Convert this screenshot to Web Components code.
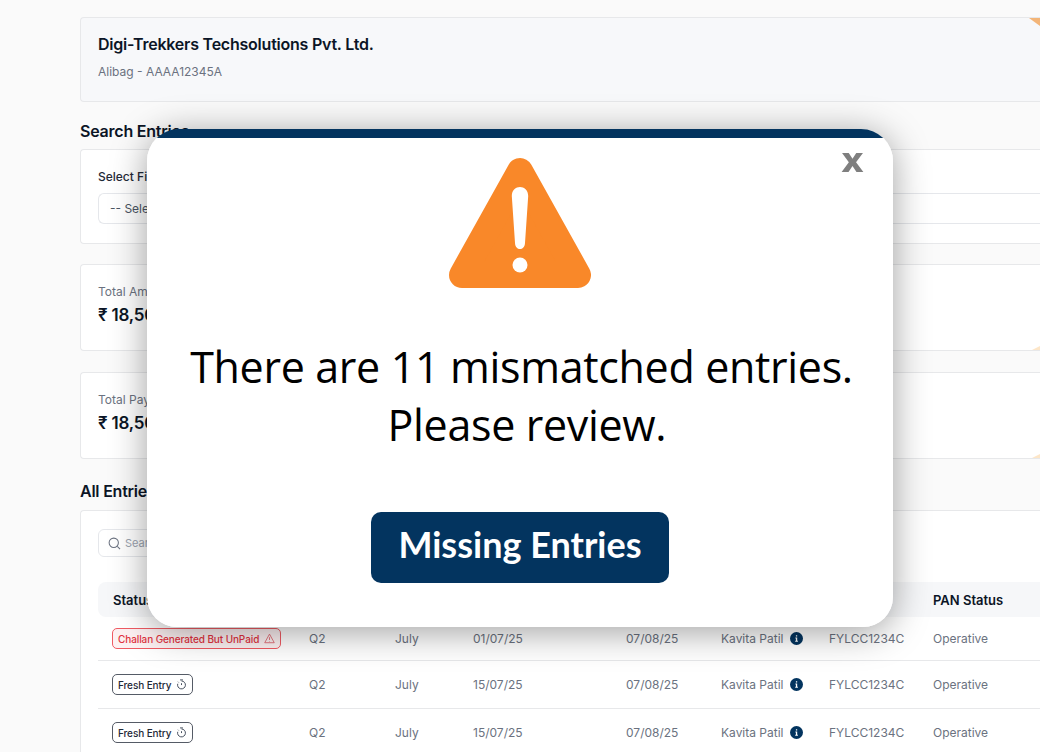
<!DOCTYPE html>
<html lang="en">

<head>
    <meta charset="UTF-8">
    <title>Entries</title>
    <style>
        html, body { margin: 0; height: 752px; overflow: hidden; background: #fafafa; }
        body { font-family: Inter, "Liberation Sans", sans-serif; color: #0b1526; }
    </style>
</head>

<body>
    <entries-page>
        <info-card name="Digi-Trekkers Techsolutions Pvt. Ltd." sub="Alibag - AAAA12345A"></info-card>
        <section-title style="margin-top:20px">Search Entries</section-title>
        <filter-card label="Select Fi" value="-- Sele"></filter-card>
        <stat-card style="margin-top:20px" label="Total Am" value="₹ 18,50"></stat-card>
        <stat-card style="margin-top:21px" label="Total Pay" value="₹ 18,50"></stat-card>
        <section-title style="margin-top:23px">All Entries</section-title>
        <entries-table>
            <entry-row status="unpaid" date="01/07/25"></entry-row>
            <entry-row status="fresh" date="15/07/25"></entry-row>
            <entry-row status="fresh" date="15/07/25"></entry-row>
        </entries-table>
    </entries-page>
    <alert-modal>
        There are 11 mismatched entries.<br>&nbsp;Please review.
        <span slot="action">Missing Entries</span>
    </alert-modal>
</body>

<script>
    class EntriesPage extends HTMLElement {
        constructor() {
            super();
            this.attachShadow({ mode: 'open' }).innerHTML = `
                <style>
                    :host { display: flex; flex-direction: column; box-sizing: border-box; width: 1040px; height: 752px; padding: 17px 0 0 80px; overflow: hidden; }
                </style>
                <slot></slot>`;
        }
    }

    class InfoCard extends HTMLElement {
        connectedCallback() {
            this.attachShadow({ mode: 'open' }).innerHTML = `
                <style>
                    :host { display: block; position: relative; overflow: hidden; box-sizing: border-box; height: 85px; padding: 16px 17px; background: #f7f8fa; border: 1px solid #e7e8ea; border-right: 0; border-radius: 4px 0 0 4px; }
                    h2 { margin: 0; font: 600 16px/20px Inter, sans-serif; letter-spacing: -.23px; color: #0b1526; }
                    p { margin: 9px 0 0; font: 400 12px/17px Inter, sans-serif; color: #6b7280; }
                    i { position: absolute; top: 0; right: 0; width: 11px; height: 8px; background: #f3b578; clip-path: polygon(0 0, 100% 0, 100% 100%); }
                </style>
                <h2>${this.getAttribute('name')}</h2>
                <p>${this.getAttribute('sub')}</p>
                <i></i>`;
        }
    }

    class SectionTitle extends HTMLElement {
        constructor() {
            super();
            this.attachShadow({ mode: 'open' }).innerHTML = `
                <style>
                    :host { display: block; font: 600 16px/18px Inter, sans-serif; letter-spacing: -.23px; color: #0b1526; }
                </style>
                <slot></slot>`;
        }
    }

    class FilterCard extends HTMLElement {
        connectedCallback() {
            this.attachShadow({ mode: 'open' }).innerHTML = `
                <style>
                    :host { display: block; box-sizing: border-box; height: 95px; margin-top: 9px; padding: 18px 0 0 17px; background: #fff; border: 1px solid #e7e8ea; border-right: 0; border-radius: 4px 0 0 4px; }
                    label { display: block; font: 500 12px/18px Inter, sans-serif; color: #1f2937; }
                    div { box-sizing: border-box; height: 31px; margin-top: 7px; padding: 0 11px; border: 1px solid #e5e7eb; border-right: 0; border-radius: 6px 0 0 6px; font: 400 12px/29px Inter, sans-serif; color: #4b5563; }
                </style>
                <label>${this.getAttribute('label')}</label>
                <div>${this.getAttribute('value')}</div>`;
        }
    }

    class StatCard extends HTMLElement {
        connectedCallback() {
            this.attachShadow({ mode: 'open' }).innerHTML = `
                <style>
                    :host { display: block; position: relative; overflow: hidden; box-sizing: border-box; height: 87px; padding: 18px 17px 0; background: #fff; border: 1px solid #e7e8ea; border-right: 0; border-radius: 4px 0 0 4px; }
                    span { display: block; font: 400 12px/18px Inter, sans-serif; color: #6b7280; }
                    b { display: block; margin-top: 3px; font: 600 17px/22px Inter, sans-serif; letter-spacing: -.2px; color: #0b1526; }
                    i { position: absolute; bottom: 0; right: 0; width: 8px; height: 4px; background: #fde6c8; clip-path: polygon(0 100%, 100% 0, 100% 100%); }
                </style>
                <span>${this.getAttribute('label')}</span>
                <b>${this.getAttribute('value')}</b>
                <i></i>`;
        }
    }

    class EntriesTable extends HTMLElement {
        constructor() {
            super();
            this.attachShadow({ mode: 'open' }).innerHTML = `
                <style>
                    :host { display: block; overflow: hidden; box-sizing: border-box; height: 242px; margin-top: 10px; padding: 18px 0 0 17px; background: #fff; border: 1px solid #e7e8ea; border-width: 1px 0 0 1px; border-radius: 4px 0 0 0; }
                    .search { display: flex; align-items: center; gap: 4px; box-sizing: border-box; width: 200px; height: 28px; padding: 0 9px; border: 1px solid #e5e7eb; border-radius: 6px; font: 400 11px Inter, sans-serif; color: #9ca3af; }
                    .head { display: grid; grid-template-columns: 820px 1fr; align-items: center; height: 35px; margin-top: 25px; padding-left: 15px; background: #f6f7f9; border-radius: 8px 0 0 8px; font: 600 13px Inter, sans-serif; color: #0b1526; }
                </style>
                <div class="search">
                    <svg width="13" height="13" viewBox="0 0 14 14" fill="none" stroke="#6b7280" stroke-width="1.1"><circle cx="6.2" cy="6.2" r="5"/><path d="M10 10l3 3"/></svg>
                    Search
                </div>
                <div class="head"><span>Status</span><span>PAN Status</span></div>
                <slot></slot>`;
        }
    }

    class StatusBadge extends HTMLElement {
        connectedCallback() {
            const unpaid = this.getAttribute('kind') === 'unpaid';
            const icon = unpaid
                ? `<svg width="11" height="11" viewBox="0 0 12 12" fill="none" stroke="#e0606a" stroke-width=".9" stroke-linejoin="round"><path d="M6 1.2L11.2 10.6H.8z"/><path d="M6 4.6v3M6 8.8v.5"/></svg>`
                : `<svg width="11" height="11" viewBox="0 0 12 12" fill="none" stroke="#374151" stroke-width="1"><path d="M6 2.2a4.3 4.3 0 1 1-4.1 3"/><path d="M4.4 1h3.2M6 4.600v2"/><path d="M2.2 3l1 1" stroke-dasharray="1 1"/></svg>`;
            this.attachShadow({ mode: 'open' }).innerHTML = `
                <style>
                    :host { display: inline-flex; align-items: center; box-sizing: border-box; height: 21px; padding: 0 5px; gap: 5px; border: 1.2px solid ${unpaid ? '#ef5b63' : '#555b66'}; border-radius: 5px; background: ${unpaid ? '#fdf1f2' : '#fff'}; font: 500 10px Inter, sans-serif; letter-spacing: -.1px; color: ${unpaid ? '#e2333f' : '#1f2937'}; white-space: nowrap; }
                </style>
                ${unpaid ? 'Challan Generated But UnPaid' : 'Fresh Entry'}${icon}`;
        }
    }

    class EntryRow extends HTMLElement {
        connectedCallback() {
            this.attachShadow({ mode: 'open' }).innerHTML = `
                <style>
                    :host { display: grid; grid-template-columns: 197px 86px 78px 153px 95px 108px 104px 1fr; align-items: center; height: 47px; padding-left: 14px; border-bottom: 1px solid #e7e8ea; font: 400 12px Inter, sans-serif; color: #6b7280; }
                    :host(:first-of-type) { height: 43px; }
                    .who { display: flex; align-items: center; gap: 6px; }
                </style>
                <div><status-badge kind="${this.getAttribute('status')}"></status-badge></div>
                <div>Q2</div>
                <div>July</div>
                <div>${this.getAttribute('date')}</div>
                <div>07/08/25</div>
                <div class="who">Kavita Patil
                    <svg width="13" height="13" viewBox="0 0 13 13"><circle cx="6.5" cy="6.5" r="6.5" fill="#03345f"/><path d="M5.4 5.600h1.800v3.200h.7v.9H5.200v-.9h.7V6.500h-.5zM5.900 3.300h1.300v1.300H5.900z" fill="#fff"/></svg>
                </div>
                <div>FYLCC1234C</div>
                <div>Operative</div>`;
        }
    }

    class AlertModal extends HTMLElement {
        constructor() {
            super();
            this.attachShadow({ mode: 'open' }).innerHTML = `
                <style>
                    :host { position: absolute; left: 147px; top: 129px; display: block; box-sizing: border-box; width: 746px; height: 498px; border-radius: 32px 32px 30px 30px; background: linear-gradient(#03345f 9px, #fff 9px); box-shadow: 0 5px 36px rgba(0,0,0,.38); }
                    .body { display: flex; flex-direction: column; align-items: center; position: relative; padding-top: 28px; }
                    .close { position: absolute; top: 24px; right: 29px; width: 23px; height: 19px; }
                    .msg { margin: 50px 0 0 3px; text-align: center; font: 400 43px/58px "Open Sans", sans-serif; letter-spacing: -.33px; color: #000; white-space: nowrap; }
                    .btn { margin-top: 58px; width: 298px; height: 71px; border-radius: 10px; background: #03345f; color: #fff; font: 700 36px/65px Lato, sans-serif; text-align: center; }
                </style>
                <div class="body">
                    <svg class="close" viewBox="0 0 22 18"><path d="M1 0h6.400L11 5.400 14.600 0H21l-6.600 8.800L21.400 18h-6.600L11 12.400 7.200 18H.6l6.900-9.200z" fill="#7f7f7f"/></svg>
                    <svg width="142" height="131" viewBox="0 0 142 131">
                        <path d="M71 14L129 118H13Z" fill="#f98829" stroke="#f98829" stroke-width="26" stroke-linejoin="round"/>
                        <path d="M62.800 39c0-12 16.400-12 16.400 0L76 86c-.4 8-9.600 8-10 0z" fill="#fff"/>
                        <circle cx="71" cy="108" r="7.500" fill="#fff"/>
                    </svg>
                    <div class="msg"><slot></slot></div>
                    <div class="btn"><slot name="action"></slot></div>
                </div>`;
        }
    }

    window.customElements.define('entries-page', EntriesPage);
    window.customElements.define('info-card', InfoCard);
    window.customElements.define('section-title', SectionTitle);
    window.customElements.define('filter-card', FilterCard);
    window.customElements.define('stat-card', StatCard);
    window.customElements.define('entries-table', EntriesTable);
    window.customElements.define('status-badge', StatusBadge);
    window.customElements.define('entry-row', EntryRow);
    window.customElements.define('alert-modal', AlertModal);
</script>

</html>
